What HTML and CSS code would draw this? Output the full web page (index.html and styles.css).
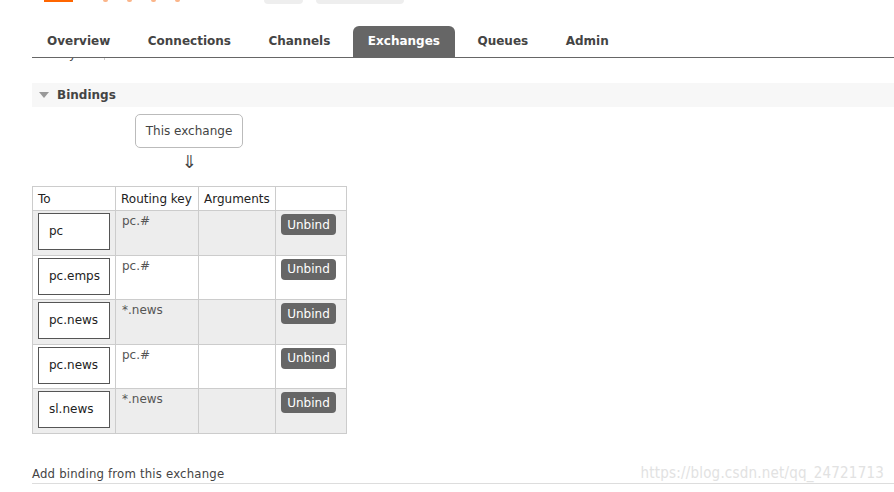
FILE: index.html
```html
<!DOCTYPE html>
<html lang="en">
<head>
  <meta charset="UTF-8">
  <title>Exchange: pc</title>
  <link rel="stylesheet" href="styles.css">
</head>
<body>

  <!-- Header (scrolled, only the bottom edge shows) -->
  <div class="header">
    <div class="logo"></div>
    <div class="logo-dots">
      <span></span><span></span><span></span><span></span>
    </div>
    <div class="pill pill-small"></div>
    <div class="pill pill-wide"></div>
  </div>

  <!-- Main tabs -->
  <ul class="tabs">
    <li>Overview</li>
    <li>Connections</li>
    <li>Channels</li>
    <li class="active">Exchanges</li>
    <li>Queues</li>
    <li>Admin</li>
  </ul>

  <div class="main">
    <!-- tail of the details table above -->
    <div class="prev-table">
      <div class="prev-label"><span>Policy</span></div>
    </div>

    <!-- Bindings -->
    <div class="section">
      <h2 class="section-title"><span class="toggle"></span>Bindings</h2>
      <div class="section-body">
        <div class="this-exchange">This exchange</div>
        <div class="arrow">&#8659;</div>

        <table class="bindings">
          <tr>
            <th class="col-to">To</th>
            <th class="col-key">Routing key</th>
            <th class="col-args">Arguments</th>
            <th class="col-action"></th>
          </tr>
          <tr class="alt1">
            <td><span class="queue-box">pc</span></td>
            <td>pc.#</td>
            <td></td>
            <td><button>Unbind</button></td>
          </tr>
          <tr class="alt0">
            <td><span class="queue-box">pc.emps</span></td>
            <td>pc.#</td>
            <td></td>
            <td><button>Unbind</button></td>
          </tr>
          <tr class="alt1">
            <td><span class="queue-box">pc.news</span></td>
            <td>*.news</td>
            <td></td>
            <td><button>Unbind</button></td>
          </tr>
          <tr class="alt0">
            <td><span class="queue-box">pc.news</span></td>
            <td>pc.#</td>
            <td></td>
            <td><button>Unbind</button></td>
          </tr>
          <tr class="alt1">
            <td><span class="queue-box">sl.news</span></td>
            <td>*.news</td>
            <td></td>
            <td><button>Unbind</button></td>
          </tr>
        </table>
      </div>
    </div>

    <!-- Add binding -->
    <div class="add-binding">
      <h3>Add binding from this exchange</h3>
      <span class="watermark">https://blog.csdn.net/qq_24721713</span>
    </div>
  </div>

</body>
</html>
```

FILE: styles.css
```css
* {
  margin: 0;
  padding: 0;
  box-sizing: border-box;
}

body {
  font-family: "DejaVu Sans", Verdana, sans-serif;
  font-size: 12px;
  color: #444;
  background-color: #fff;
  width: 894px;
  overflow: hidden;
}

/* Header */
.header {
  height: 26px;
  display: flex;
  align-items: flex-start;
  padding-left: 44px;
}

.logo {
  width: 29px;
  height: 2px;
  background-color: #f60;
}

.logo-dots {
  display: flex;
  margin-left: 30px;
}

.logo-dots span {
  width: 5px;
  height: 2px;
  border-radius: 0 0 3px 3px;
  background-color: #fbb58a;
  margin-right: 19px;
}

.pill {
  height: 4px;
  background-color: #eee;
  border-radius: 0 0 5px 5px;
}

.pill-small {
  width: 39px;
  margin-left: 65px;
}

.pill-wide {
  width: 88px;
  margin-left: 13px;
}

/* Tabs */
.tabs {
  list-style: none;
  display: flex;
  margin-left: 32px;
  height: 32px;
  border-bottom: 1px solid #666;
}

.tabs li {
  padding: 0 15px;
  margin-right: 7.5px;
  line-height: 31px;
  font-weight: bold;
  font-size: 12px;
  color: #444;
  border-radius: 6px 6px 0 0;
}

.tabs li.active {
  background-color: #666;
  color: #fff;
}

.main {
  padding-left: 32px;
}

/* tail of previous table */
.prev-table {
  height: 13px;
  overflow: hidden;
}

.prev-label {
  width: 73px;
  height: 13px;
  border-right: 1px solid #ccc;
  text-align: right;
  padding-right: 28px;
}

.prev-label span {
  display: block;
  margin-top: -11px;
  font-size: 12px;
  color: #444;
}

/* Section */
.section {
  margin-top: 12px;
}

.section-title {
  display: flex;
  align-items: center;
  height: 24px;
  background-color: #f7f7f7;
  font-size: 12px;
  font-weight: bold;
  color: #444;
  padding-left: 7px;
}

.toggle {
  width: 0;
  height: 0;
  border-left: 5px solid transparent;
  border-right: 5px solid transparent;
  border-top: 6px solid #999;
  margin-right: 8px;
}

.section-body {
  padding-top: 7px;
}

.this-exchange {
  width: 108px;
  height: 34px;
  line-height: 32px;
  margin-left: 103px;
  border: 1px solid #bbb;
  border-radius: 5px;
  text-align: center;
  color: #444;
}

.arrow {
  width: 108px;
  margin-left: 103px;
  text-align: center;
  font-size: 18px;
  line-height: 18px;
  margin-top: 5px;
  color: #444;
}

/* Bindings table */
.bindings {
  border-collapse: collapse;
  margin-top: 15px;
  table-layout: fixed;
}

.bindings th,
.bindings td {
  border: 1px solid #ccc;
  text-align: left;
  vertical-align: top;
}

.bindings th {
  font-weight: normal;
  color: #222;
  height: 24px;
  padding: 5px 5px 0;
}

.col-to { width: 83px; }
.col-key { width: 83px; }
.col-args { width: 77px; }
.col-action { width: 71px; }

.bindings td {
  height: 44.5px;
  padding: 3px 6px 0;
  color: #555;
}

.bindings tr.alt1 td {
  background-color: #ededed;
}

.bindings tr.alt0 td {
  background-color: #fff;
}

.queue-box {
  display: block;
  width: 72px;
  height: 37px;
  line-height: 35px;
  padding-left: 10px;
  border: 1px solid #555;
  background-color: #fff;
  color: #222;
}

.bindings td:first-child {
  padding: 2px 5px 0;
}

button {
  font-family: "DejaVu Sans", Verdana, sans-serif;
  font-size: 12px;
  background-color: #666;
  color: #fff;
  border: none;
  border-radius: 4px;
  width: 55px;
  height: 21px;
  margin-left: -1px;
  cursor: pointer;
}

/* Add binding */
.add-binding {
  margin-top: 30px;
  display: flex;
  justify-content: space-between;
  align-items: baseline;
  border-bottom: 1px solid #ddd;
  padding-bottom: 1px;
}

.add-binding h3 {
  font-family: "DejaVu Sans Condensed", "Liberation Sans Narrow", sans-serif;
  font-weight: normal;
  font-size: 13px;
  letter-spacing: 0.2px;
  color: #444;
}

.watermark {
  font-family: "DejaVu Sans Condensed", "Liberation Sans Narrow", sans-serif;
  font-size: 15px;
  letter-spacing: 0.2px;
  color: #e2e2e2;
  margin-right: 10px;
}
```
